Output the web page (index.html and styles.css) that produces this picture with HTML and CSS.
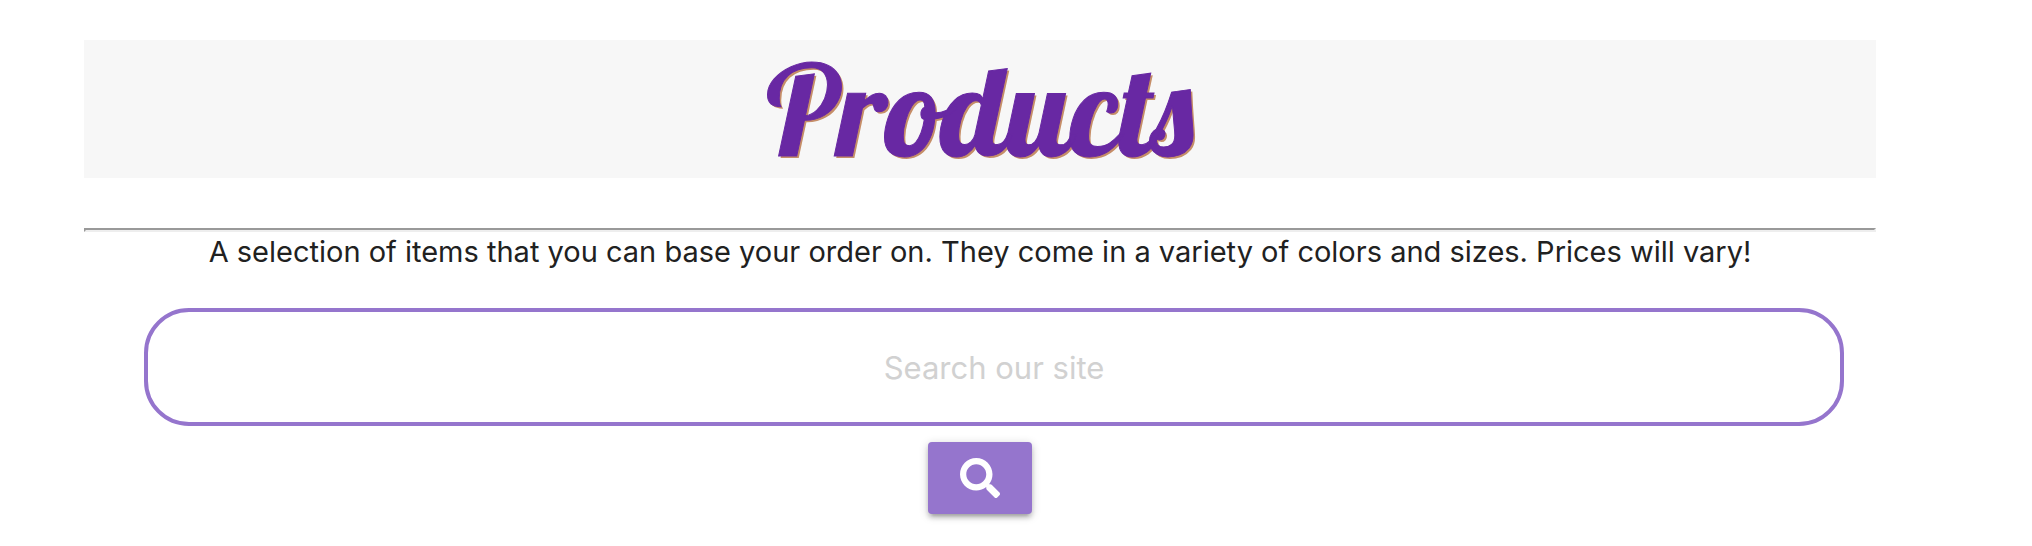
FILE: index.html
```html
<!DOCTYPE html>
<html lang="en">
<head>
<meta charset="utf-8">
<meta name="viewport" content="width=device-width, initial-scale=1">
<title>Products</title>
<link rel="stylesheet" href="styles.css">
</head>
<body>
<main class="page">
  <h1 class="title">Products</h1>
  <hr class="rule">
  <p class="intro">A selection of items that you can base your order on. They come in a variety of colors and sizes. Prices will vary!</p>
  <form class="search">
    <input class="search-input" type="text" placeholder="Search our site" aria-label="Search our site">
    <button class="search-button" type="submit" aria-label="Search">
      <svg class="search-icon" viewBox="0 0 512 512" aria-hidden="true"><path fill="currentColor" d="M505 442.700L405.300 343c-4.500-4.500-10.600-7-17-7H372c27.600-35.300 44-79.700 44-128C416 93.100 322.900 0 208 0S0 93.100 0 208s93.100 208 208 208c48.300 0 92.700-16.400 128-44v16.300c0 6.400 2.500 12.500 7 17l99.700 99.700c9.400 9.400 24.600 9.400 33.900 0l28.300-28.300c9.400-9.400 9.400-24.600.1-34zM208 336c-70.700 0-128-57.200-128-128 0-70.700 57.200-128 128-128 70.700 0 128 57.200 128 128 0 70.700-57.200 128-128 128z"/></svg>
    </button>
  </form>
</main>
</body>
</html>
```
FILE: styles.css
```css
* {
  box-sizing: border-box;
}

body {
  margin: 0;
  background: #fff;
  color: #212121;
  font-family: Inter, "Liberation Sans", sans-serif;
}

.page {
  padding: 40px 156px 32px 84px;
}

.title {
  margin: 0 0 50px;
  background: #f7f7f7;
  color: #6828a3;
  font-family: Lobster, "Liberation Serif", serif;
  font-size: 126px;
  font-weight: 400;
  line-height: 138px;
  text-align: center;
  text-shadow: 2px 2px 0 #c68e68;
  -webkit-text-stroke: 1px #6828a3;
}

.rule {
  height: 4px;
  margin: 0;
  border: 2px solid;
  border-color: #999 #eee #eee #999;
}

.intro {
  margin: 0 0 36px;
  font-size: 29px;
  line-height: 40px;
  text-align: center;
}

.search {
  display: flex;
  flex-direction: column;
  align-items: center;
  gap: 16px;
}

.search-input {
  align-self: stretch;
  height: 118px;
  margin: 0 32px 0 60px;
  padding: 0 32px;
  border: 4px solid #9575cd;
  border-radius: 45px;
  background: transparent;
  color: inherit;
  font: 31px/40px Inter, "Liberation Sans", sans-serif;
  text-align: center;
}

.search-input::placeholder {
  color: #d1d1d1;
  opacity: 1;
}

.search-button {
  display: flex;
  padding: 16px 32px;
  border: 0;
  border-radius: 4px;
  background: #9575cd;
  box-shadow: 0 4px 4px rgba(0, 0, 0, 0.14), 0 6px 2px -4px rgba(0, 0, 0, 0.12), 0 2px 10px rgba(0, 0, 0, 0.2);
  color: #fff;
}

.search-icon {
  width: 40px;
  height: 40px;
}
```
